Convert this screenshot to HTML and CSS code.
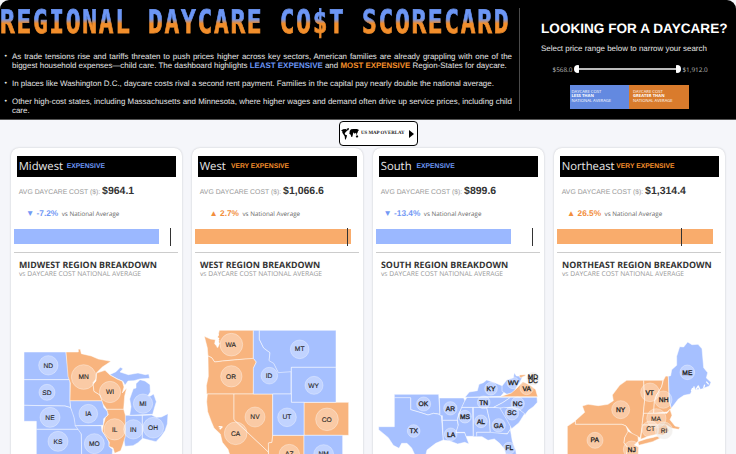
FILE: index.html
```html
<!DOCTYPE html>
<html lang="en">
<head>
<meta charset="utf-8">
<title>Regional Daycare Cost Scorecard</title>
<link rel="stylesheet" href="styles.css">
</head>
<body>
<header class="header">
  <section class="intro">
    <h1 class="title">REGIONAL DAYCARE CO$T SCORECARD</h1>
    <ul class="notes">
      <li>As trade tensions rise and tariffs threaten to push prices higher across key sectors, American families are already grappling with one of the biggest household expenses—child care. The dashboard highlights <b class="blue">LEAST EXPENSIVE</b> and <b class="orange">MOST EXPENSIVE</b> Region-States for daycare.</li>
      <li>In places like Washington D.C., daycare costs rival a second rent payment. Families in the capital pay nearly double the national average.</li>
      <li>Other high-cost states, including Massachusetts and Minnesota, where higher wages and demand often drive up service prices, including child care.</li>
    </ul>
  </section>
  <section class="finder">
    <h2>LOOKING FOR A DAYCARE?</h2>
    <p class="hint">Select price range below to narrow your search</p>
    <div class="slider"><span>$568.0</span><div class="track"><i class="knob left"></i><i class="line"></i><i class="knob right"></i></div><span>$1,912.0</span></div>
    <div class="legend">
      <div class="less">DAYCARE COST<br><b>LESS THAN</b><br>NATIONAL AVERAGE</div>
      <div class="more">DAYCARE COST<br><b>GREATER THAN</b><br>NATIONAL AVERAGE</div>
    </div>
  </section>
</header>
<div class="toolbar">
  <button class="overlay">
    <svg class="world" viewBox="0 0 54 36"><path d="M0 8 6 4 14 3 19 6 17 10 14 12 11 17 13 20 18 22 17 27 14 35 12 34 11 25 8 20 4 14 4 10ZM17 2 24 0 23 5 20 8ZM26 9 30 4 37 3 48 3 54 6 51 10 49 16 46 18 43 14 40 17 37 13 36 18 34 26 31 27 29 20 25 17 26 12ZM44 24 50 22 52 27 47 29ZM45 18 49 20 47 22Z"/></svg>
    <span>US MAP OVERLAY</span>
    <svg class="arrow" viewBox="0 0 5 8"><path d="M0 0 5 4 0 8Z"/></svg>
  </button>
</div>
<main class="cards">
  <article class="card">
    <h3 class="name">Midwest <b class="blue">EXPENSIVE</b></h3>
    <p class="avg">AVG DAYCARE COST ($): <b>$964.1</b></p>
    <p class="delta midwest"><b class="down">▼ -7.2%</b> <span>vs National Average</span></p>
    <div class="bar"><i class="fill low" style="width:144.5px"></i><i class="tick" style="left:156px"></i></div>
    <h4>MIDWEST REGION BREAKDOWN</h4>
    <p class="sub">vs DAYCARE COST NATIONAL AVERAGE</p>
    <svg class="map map-midwest" viewBox="0 0 525 372">
      <g class="low">
        <path d="M42 66H168L172 100 178 126 180 149H42Z"/><path d="M42 149H180V213L182 233 165 228 42 226Z"/>
        <path d="M42 226 165 228 182 233 190 248 196 275 208 298H79V274H42Z"/><path d="M79 298H208L214 312 215 380H79Z"/>
        <path d="M180 212H278L281 232 294 245 293 256 281 266 280 286 196 288 192 262 182 233Z"/><path d="M196 287H274L276 303 289 322 296 334 298 350 308 358 306 380H215L214 312Z"/>
        <path d="M345 256H397V326L384 338 369 347 345 349 342 330Z"/><path d="M397 256 425 255 439 262 454 261 474 251 472 282 465 302 454 318 438 335 420 331 397 325Z"/>
        <path d="M359 256 363 230 359 207 365 190 370 176 378 174 378 161 390 149 405 153 420 164 421 186 414 197 421 198 431 192 439 215 433 235 428 253Z"/>
        <path d="M299 134 318 125 331 112 339 116 330 126 355 134 384 129 406 134 416 132 419 145 390 147 372 152 354 153 345 166 339 154 323 147Z"/>
      </g>
      <g class="high">
        <path d="M168 66H205V57L211 58 214 71 244 78 265 87 303 94 277 111 260 128 258 147 249 158 252 184 270 195 278 212H180L181 159 174 139Z"/>
        <path d="M260 129 285 121 300 135 321 147 337 154 342 171 337 189 350 174 344 198 341 238H290L279 222 270 195 252 184 249 162 258 153Z"/>
        <path d="M290 238H341L346 255V319L338 346 332 362 314 370 309 354 297 349 298 337 277 303 280 285 286 263 295 254Z"/>
      </g>
      <g class="dots"><circle cx="115" cy="106" r="29"/><circle cx="111" cy="187" r="24"/><circle cx="120" cy="262" r="30"/><circle cx="144" cy="334" r="30"/><circle cx="221" cy="141" r="37"/><circle cx="300" cy="186" r="32"/><circle cx="235" cy="251" r="28"/><circle cx="253" cy="341" r="30"/><circle cx="314" cy="298" r="32"/><circle cx="370" cy="298" r="29"/><circle cx="430" cy="293" r="31"/><circle cx="399" cy="221" r="29"/></g>
      <g class="labels"><text x="115" y="113">ND</text><text x="111" y="194">SD</text><text x="120" y="269">NE</text><text x="144" y="341">KS</text><text x="221" y="148">MN</text><text x="300" y="193">WI</text><text x="235" y="258">IA</text><text x="253" y="348">MO</text><text x="314" y="305">IL</text><text x="370" y="305">IN</text><text x="429" y="300">OH</text><text x="399" y="228">MI</text></g>
    </svg>
  </article>
  <article class="card">
    <h3 class="name">West <b class="orange gap">VERY EXPENSIVE</b></h3>
    <p class="avg">AVG DAYCARE COST ($): <b>$1,066.6</b></p>
    <p class="delta west"><b class="up">▲ 2.7%</b> <span>vs National Average</span></p>
    <div class="bar"><i class="fill high" style="width:155.5px"></i><i class="tick" style="left:152px"></i></div>
    <h4>WEST REGION BREAKDOWN</h4>
    <p class="sub">vs DAYCARE COST NATIONAL AVERAGE</p>
    <svg class="map map-west" viewBox="0 0 525 402">
      <g class="high">
        <path d="M43 49 61 57 76 59 74 72 84 82 87 61 82 55 88 31H190V116L142 119 98 123 74 126 65 113 54 108 52 84Z"/>
        <path d="M54 108 65 113 74 126 98 123 142 119 190 115 199 126 191 143 190 222H50L49 197 55 169Z"/>
        <path d="M52 222H132V299L235 396 236 410H121L114 388 97 367 91 342 72 324 64 305 53 275 50 245Z"/>
        <path d="M132 222H248V346L246 367 236 369 235 396 132 299Z"/><path d="M342 247H476V346H342Z"/><path d="M248 346H342V410H236L235 369 246 367Z"/>
      </g>
      <g class="low">
        <path d="M190 31H208V58L221 84 240 98 238 120 252 128 264 154 303 153V222H190V145L199 126 190 115Z"/>
        <path d="M208 31H438V142H304V155L265 158 251 130 237 122 240 98 221 84 208 58Z"/><path d="M304 142H438V247H304Z"/>
        <path d="M248 222H304V247H342V346H248Z"/><path d="M342 346H458V410H342Z"/>
      </g>
      <path class="inlet" d="M83 34 77 37 85 45 76 52 86 55 78 65 87 70 81 82M86 320 96 321 89 328"/>
      <g class="dots"><circle cx="124" cy="74" r="34"/><circle cx="124" cy="169" r="32"/><circle cx="329" cy="88" r="28"/><circle cx="238" cy="167" r="25"/><circle cx="372" cy="196" r="27"/><circle cx="195" cy="291" r="30"/><circle cx="291" cy="292" r="28"/><circle cx="411" cy="298" r="34"/><circle cx="137" cy="340" r="34"/><circle cx="298" cy="404" r="31"/><circle cx="401" cy="404" r="30"/></g>
      <g class="labels"><text x="122" y="80">WA</text><text x="123" y="176">OR</text><text x="329" y="94">MT</text><text x="237" y="174">ID</text><text x="371" y="203">WY</text><text x="195" y="298">NV</text><text x="291" y="298">UT</text><text x="410" y="305">CO</text><text x="137" y="347">CA</text><text x="298" y="409">AZ</text><text x="401" y="409">NM</text></g>
    </svg>
  </article>
  <article class="card">
    <h3 class="name">South <b class="blue gap">EXPENSIVE</b></h3>
    <p class="avg">AVG DAYCARE COST ($): <b>$899.6</b></p>
    <p class="delta south"><b class="down">▼ -13.4%</b> <span>vs National Average</span></p>
    <div class="bar"><i class="fill low" style="width:134.5px"></i><i class="tick" style="left:156px"></i></div>
    <h4>SOUTH REGION BREAKDOWN</h4>
    <p class="sub">vs DAYCARE COST NATIONAL AVERAGE</p>
    <svg class="map map-south" viewBox="0 0 540 282">
      <g class="low">
        <path d="M73 103H206L210 163 191 160 174 165 153 158 122 149V114H73Z"/>
        <path d="M73 113H122V149L153 158 174 165 191 160 214 164 217 204 220 240 197 250 171 270 166 290H137L125 264 111 250 95 250 87 265 70 256 55 233 26 209V200H73Z"/>
        <path d="M208 114H281L285 123 277 141 266 161 262 181H217V167H210Z"/><path d="M217 181H262L265 198 258 218H285L290 234 297 252 284 247 263 252 240 243 220 240Z"/>
        <path d="M275 142H308L310 229H288L284 217H258L265 195 262 178Z"/><path d="M310 142H350L359 182 361 217H320L323 230H310Z"/>
        <path d="M350 142H393L425 176 421 209 412 221H361L359 182Z"/><path d="M291 112H422L398 128 371 142H275L283 125Z"/>
        <path d="M285 112 298 96 322 92 327 73 340 68 350 60 374 68 396 77 409 89 392 109Z"/><path d="M396 78 410 60 430 53 433 38 439 48 458 49 450 66 441 80 430 98 411 103 396 94Z"/>
        <path d="M422 112H501L502 127 490 140 475 151 465 164 443 146 414 142 401 145 371 142 398 128Z"/><path d="M390 145 401 142 443 145 464 161 447 188 425 206 411 180Z"/>
        <path d="M320 217H361L412 222 421 208 427 244 437 270 440 290H409L403 267 389 250 373 237 354 241 336 230 320 230Z"/>
      </g>
      <g class="high"><path d="M390 110 424 99 439 86 459 65 481 76 497 89 503 110Z"/><path d="M448 45 466 44 466 47 450 54Z"/></g>
      <g class="dots"><circle cx="161" cy="132" r="21"/><circle cx="241" cy="145" r="20"/><circle cx="131" cy="213" r="19"/><circle cx="242" cy="223" r="19"/><circle cx="285" cy="170" r="19"/><circle cx="333" cy="184" r="19"/><circle cx="386" cy="196" r="20"/><circle cx="341" cy="127" r="19"/><circle cx="363" cy="86" r="19"/><circle cx="429" cy="68" r="18"/><circle cx="470" cy="84" r="20"/><circle cx="443" cy="131" r="20"/><circle cx="426" cy="160" r="20"/><circle cx="417" cy="265" r="18"/><circle class="pale" cx="489" cy="56" r="20"/></g>
      <g class="labels bold"><text x="160" y="138">OK</text><text x="241" y="152">AR</text><text x="131" y="219">TX</text><text x="243" y="230">LA</text><text x="285" y="177">MS</text><text x="333" y="191">AL</text><text x="386" y="203">GA</text><text x="341" y="134">TN</text><text x="363" y="93">KY</text><text x="430" y="74">WV</text><text x="470" y="93">VA</text><text x="443" y="138">NC</text><text x="426" y="166">SC</text><text x="418" y="271">FL</text><text x="489" y="58">MD</text><text x="489" y="68">DC</text></g>
    </svg>
  </article>
  <article class="card">
    <h3 class="name">Northeast <b class="orange tight">VERY EXPENSIVE</b></h3>
    <p class="avg">AVG DAYCARE COST ($): <b>$1,314.4</b></p>
    <p class="delta northeast"><b class="up">▲ 26.5%</b> <span>vs National Average</span></p>
    <div class="bar"><i class="fill high" style="width:155.5px"></i><i class="tick" style="left:123.5px"></i></div>
    <h4>NORTHEAST REGION BREAKDOWN</h4>
    <p class="sub">vs DAYCARE COST NATIONAL AVERAGE</p>
    <svg class="map map-northeast" viewBox="0 0 552 372">
      <g class="high">
        <path d="M70 272 98 247 91 228 108 223 139 227 168 223 184 212 181 195 203 166 224 151H275L278 210 274 251 270 292 265 323 244 316 222 288 210 283H70Z"/>
        <path d="M46 289 70 273V283H210L222 288 229 306 218 323 216 339 228 353 222 380H46Z"/><path d="M228 304 258 319 259 333 247 345 260 351 259 380H221L228 353 216 339 218 323Z"/>
        <path d="M275 151H333L329 170 314 195 307 217 305 250H274L278 210Z"/><path d="M334 151 341 138 349 139 352 213 358 235 345 246 305 250 307 215 314 195 329 170Z"/>
        <path d="M275 250H345L354 238 360 256 354 269 369 288 384 292 380 298 360 295 343 285H270Z"/><path d="M271 285H318V312L289 319 266 328Z"/><path d="M318 285H343L351 303 333 315 318 313Z"/><path d="M258 335 282 327 316 319 325 324 302 335 260 346Z"/>
      </g>
      <path class="low" d="M349 139 356 137 359 119 374 106V79L383 50 395 51 407 36 420 44 438 43 450 56 455 113 467 128 463 144 477 157 472 168 449 177 430 179 426 169 415 192 396 196 379 207 358 235 352 213Z"/>
      <path class="inlet" d="M432 178 439 168 444 181M418 184 422 174M455 174 458 164M470 163 463 155"/>
      <g class="dots"><circle cx="406" cy="127" r="22"/><circle cx="294" cy="187" r="28"/><circle cx="334" cy="209" r="26"/><circle cx="206" cy="239" r="27"/><circle cx="313" cy="265" r="29"/><circle cx="295" cy="298" r="25"/><circle class="pale" cx="336" cy="302" r="26"/><circle cx="129" cy="331" r="24"/><circle cx="239" cy="358" r="25"/></g>
      <g class="labels bold"><text x="406" y="134">ME</text><text x="293" y="194">VT</text><text x="335" y="216">NH</text><text x="206" y="246">NY</text><text x="312" y="272" class="regular">MA</text><text x="296" y="304" class="regular">CT</text><text x="336" y="309" class="regular">RI</text><text x="128" y="337">PA</text><text x="239" y="366">NJ</text></g>
    </svg>
  </article>
</main>
</body>
</html>
```
FILE: styles.css
```css
* { box-sizing: border-box; }
body { margin: 0; width: 736px; height: 454px; overflow: hidden; background: #f5f6fa; font-family: "Liberation Sans", Arial, sans-serif; color: #333; text-rendering: geometricPrecision; }
h1, h2, h3, h4, p, ul { margin: 0; padding: 0; font-weight: normal; }
.header { display: flex; height: 119.5px; background: #000; border-radius: 9px 9px 0 0; color: #e6e6e6; border-bottom: 1px solid #555; }
.blue { color: #6c96f5; }
.orange { color: #f28e2b; }
.intro { width: 519px; }
.title { width: 576px; height: 44px; white-space: nowrap; font: bold 27.3px/46px "DejaVu Sans Mono", monospace; letter-spacing: 1.85px; -webkit-text-stroke: .7px transparent; transform: scale(.9, 1.19); transform-origin: 0 50%; background: linear-gradient(#6c96f5 0 44%, #f28e2b 53%); -webkit-background-clip: text; background-clip: text; color: transparent; }
.notes { list-style: none; padding: 8px 7px 0 12px; font-size: 7.93px; line-height: 9px; text-align: justify; }
.notes li { margin-bottom: 9px; }
.notes li::before { content: "•"; float: left; width: 7.5px; margin-left: -7.5px; font-size: 7px; }
.finder { margin: 8px 0; height: 103px; border-left: 1.5px solid #4a4a4a; padding: 11px 0 0 21px; width: 216px; }
.finder h2 { font-size: 13.6px; font-weight: bold; line-height: 19px; white-space: nowrap; color: #fff; }
.hint { margin-top: 5px; font-size: 7.95px; line-height: 11px; white-space: nowrap; }
.slider { display: flex; align-items: center; gap: 1.5px; margin: 10px 0 0 11.5px; height: 10px; font: 6.4px/10px "Open Sans", sans-serif; color: #bbb; }
.slider span { padding-top: 2px; }
.track { display: flex; align-items: center; width: 107px; height: 10px; }
.line { flex: 1; height: 2px; background: #bbb; }
.knob { width: 5px; height: 8px; background: #fff; }
.left { border-radius: 5px 1px 1px 5px; }
.right { border-radius: 1px 5px 5px 1px; }
.legend { display: flex; width: 119px; height: 24px; margin: 11px 0 0 28.5px; font: 4.2px/4.9px "Open Sans", sans-serif; color: #fff; white-space: nowrap; }
.legend div { width: 59.5px; padding: 5.5px 0 0 2px; }
.less { background: #6389e0; }
.legend .more { background: #d97b2c; padding-left: 4px; }
.toolbar { display: flex; height: 28.5px; padding: 1.5px 0 0 338.5px; }
.overlay { position: relative; z-index: 1; display: flex; align-items: center; width: 79px; height: 25px; padding: 0 1px; background: #fff; border: 1.5px solid #000; border-radius: 4px; font: bold 4.9px/8px "Liberation Serif", serif; color: #222; white-space: nowrap; text-rendering: geometricPrecision; }
.world { width: 18px; height: 12px; margin-right: 2.5px; flex: none; }
.arrow { width: 5px; height: 8px; margin-left: auto; margin-right: 2px; flex: none; }
.cards { display: grid; grid-template-columns: repeat(4, 171.5px); gap: 9.5px; padding-left: 10.5px; }
.card { height: 320px; background: #fff; border-radius: 8px; box-shadow: 0 0 2px #bfc0c5; padding: 8px 3.5px 0; overflow: hidden; }
.name { margin: 0 2.5px; height: 20.5px; padding-left: 2.2px; background: #000; color: #e8e8e8; font: 11.3px/21.5px "Open Sans", sans-serif; white-space: nowrap; display: flex; gap: 3.5px; }
.name b { font: bold 6.75px/21px "Liberation Sans", sans-serif; }
.name .gap { margin-left: 1.5px; }
.name .tight { margin-left: -1.8px; }
.avg { margin: 7px 0 0 4.8px; height: 15px; line-height: 15px; font-size: 6.85px; color: #999; white-space: nowrap; }
.avg b { font-size: 10.5px; color: #333; }
.delta { display: flex; gap: 3.5px; height: 12px; margin-top: 8px; line-height: 12px; font-size: 8.3px; white-space: nowrap; }
.delta span { font: 6.27px/13px "Open Sans", sans-serif; color: #666; }
.midwest { padding-left: 12px; }
.west { padding-left: 14.5px; }
.south { padding-left: 7.5px; }
.northeast { padding-left: 10px; }
.down { color: #7399f5; }
.up { color: #f28e3c; }
.bar { position: relative; height: 34.5px; padding-top: 10.5px; margin-right: .5px; border-bottom: 1px solid #ccc; }
.fill { display: block; height: 14.5px; }
.fill.low { background: #9bb8ff; }
.fill.high { background: #f9ac6c; }
.tick { position: absolute; top: 9.5px; width: 1px; height: 18px; background: #333; }
.card h4 { margin: 6.5px 0 0 5px; font: bold 8.83px/11px "Open Sans", sans-serif; white-space: nowrap; }
.sub { margin-left: 5px; margin-top: -1px; font: 6.75px/8px "Open Sans", sans-serif; color: #999; white-space: nowrap; }
.map { display: block; }
.map .low { fill: #a6c0ff; }
.map .high { fill: #f8b47e; }
.map path { stroke: #fff; stroke-width: 1.5; stroke-linejoin: round; }
.map .inlet { fill: none; stroke-width: 4; }
.dots { fill: #fff; fill-opacity: .3; stroke: #fff; stroke-opacity: .5; stroke-width: 2; }
.pale { fill: #e8e3e0; fill-opacity: .5; }
.labels { font-size: 20px; fill: #222; text-anchor: middle; stroke: #222; stroke-width: .3; }
.bold { stroke-width: .9; }
.regular { stroke-width: .2; }
.map-midwest { width: 175px; height: 124px; margin: 52.5px 0 0 -4px; }
.map-west { width: 175px; height: 134px; margin: 42.5px 0 0 -5px; }
.map-south { width: 180px; height: 94px; margin: 82.5px 0 0 -6px; }
.map-northeast { width: 184px; height: 124px; margin: 52.5px 0 0 -5px; }
```
